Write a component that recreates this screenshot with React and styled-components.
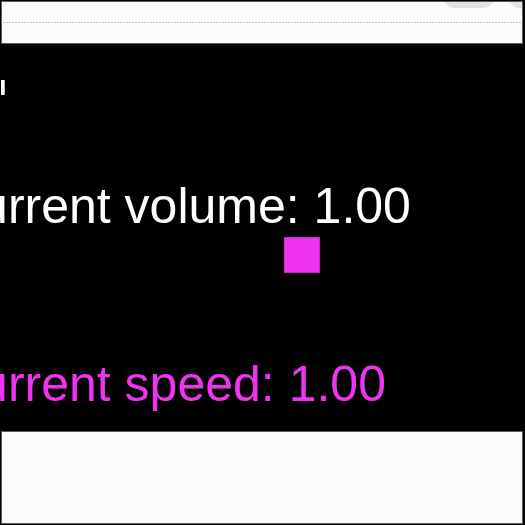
import React from "react";
import styled, { createGlobalStyle } from "styled-components";

const Global = createGlobalStyle`
  html, body { margin: 0; padding: 0; background: #000; }
  body { width: 525px; height: 525px; overflow: hidden; font-family: "Liberation Sans", Arial, sans-serif; }
  #root { width: 525px; height: 525px; }
`;

const Page = styled.div`
  width: 525px;
  height: 525px;
  display: flex;
  flex-direction: column;
  background: #000;
  overflow: hidden;
`;

const Panel = styled.div`
  box-sizing: border-box;
  margin: ${(p) => (p.$top ? "1px 2px 0 1px" : "0 2px 1px 1px")};
  height: ${(p) => p.$h}px;
  background: #fbfbfb;
  border: 1px solid #5c5c5c;
  display: flex;
  flex-direction: column;
  overflow: hidden;
  flex-shrink: 0;
`;

const PillRow = styled.div`
  display: flex;
  justify-content: flex-end;
  gap: 15px;
  margin-top: -16px;
  margin-right: -27px;
  height: 22px;
  flex-shrink: 0;
`;

const Pill = styled.div`
  height: 22px;
  width: ${(p) => p.$w}px;
  border-radius: 11px;
  background: #e2e2e2;
  display: flex;
  align-items: center;
  gap: 4px;
  padding: 0 9px;
  box-sizing: border-box;
  font-size: 11px;
  color: #777;
  flex-shrink: 0;
`;

const Dot = styled.span`
  width: 8px;
  height: 8px;
  border-radius: 50%;
  background: ${(p) => p.$c};
  flex-shrink: 0;
`;

const Dotted = styled.div`
  margin: 14px 1px 0;
  height: 1px;
  flex-shrink: 0;
  background: repeating-linear-gradient(to right, #c4c4c4 0 2px, transparent 2px 3px);
`;

const Stage = styled.div`
  height: 387px;
  flex-shrink: 0;
  background: #000;
  display: flex;
  flex-direction: column;
  overflow: hidden;
`;

const Marker = styled.div`
  margin: 36px 0 0 1px;
  width: 4px;
  height: 15px;
  background: #fff;
  box-shadow: inset -1px 0 0 #bbb;
`;

const Readout = styled.div`
  margin-left: -56px;
  margin-top: ${(p) => p.$mt}px;
  font-family: "Liberation Sans", Arial, sans-serif;
  font-size: 50px;
  line-height: 50px;
  height: 50px;
  white-space: nowrap;
  color: ${(p) => p.$color};
`;

const Square = styled.div`
  margin: 6px 0 0 284px;
  width: 36px;
  height: 36px;
  box-sizing: border-box;
  background: #f033f0;
  border: 1px solid #c824c8;
`;

export default function App() {
  return (
    <>
      <Global />
      <Page>
        <Panel $top $h={43}>
          <PillRow>
            <Pill $w={50}>
              <Dot $c="#333" />
              Pause
            </Pill>
            <Pill $w={40}>
              <Dot $c="#c44" />
            </Pill>
          </PillRow>
          <Dotted />
        </Panel>
        <Stage>
          <Marker />
          <Readout $mt={86} $color="#ffffff">Current volume: 1.00</Readout>
          <Square />
          <Readout $mt={86} $color="#f033f0">Current speed: 1.00</Readout>
        </Stage>
        <Panel $h={93} />
      </Page>
    </>
  );
}
